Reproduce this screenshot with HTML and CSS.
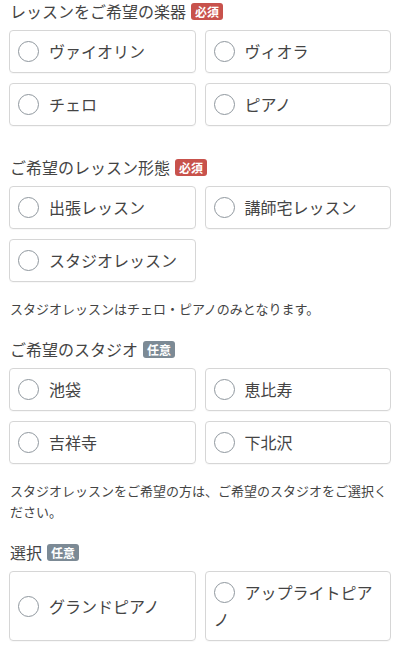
FILE: index.html
```html
<!DOCTYPE html>
<html lang="ja">
<head>
<meta charset="utf-8">
<link rel="stylesheet" href="styles.css">
</head>
<body>
<div class="form">
  <div class="field">
    <div class="label">レッスンをご希望の楽器<span class="badge badge-req">必須</span></div>
    <div class="choices">
      <label class="choice"><span class="text"><span class="radio"></span>ヴァイオリン</span></label>
      <label class="choice"><span class="text"><span class="radio"></span>ヴィオラ</span></label>
      <label class="choice"><span class="text"><span class="radio"></span>チェロ</span></label>
      <label class="choice"><span class="text"><span class="radio"></span>ピアノ</span></label>
    </div>
  </div>
  <div class="field">
    <div class="label">ご希望のレッスン形態<span class="badge badge-req">必須</span></div>
    <div class="choices">
      <label class="choice"><span class="text"><span class="radio"></span>出張レッスン</span></label>
      <label class="choice"><span class="text"><span class="radio"></span>講師宅レッスン</span></label>
      <label class="choice"><span class="text"><span class="radio"></span>スタジオレッスン</span></label>
    </div>
    <p class="note">スタジオレッスンはチェロ・ピアノのみとなります。</p>
  </div>
  <div class="field">
    <div class="label">ご希望のスタジオ<span class="badge badge-opt">任意</span></div>
    <div class="choices">
      <label class="choice"><span class="text"><span class="radio"></span>池袋</span></label>
      <label class="choice"><span class="text"><span class="radio"></span>恵比寿</span></label>
      <label class="choice"><span class="text"><span class="radio"></span>吉祥寺</span></label>
      <label class="choice"><span class="text"><span class="radio"></span>下北沢</span></label>
    </div>
    <p class="note">スタジオレッスンをご希望の方は、ご希望のスタジオをご選択ください。</p>
  </div>
  <div class="field">
    <div class="label">選択<span class="badge badge-opt">任意</span></div>
    <div class="choices">
      <label class="choice"><span class="text"><span class="radio"></span>グランドピアノ</span></label>
      <label class="choice"><span class="text"><span class="radio"></span>アップライトピアノ</span></label>
    </div>
  </div>
</div>
</body>
</html>
```
FILE: styles.css
```css
html, body {
  margin: 0;
  padding: 0;
  background: #ffffff;
}
body {
  font-family: "Noto Sans CJK JP", "Noto Sans", sans-serif;
  color: #333333;
}
.form {
  padding: 1px 9px 0;
}
.field {
  padding-bottom: 20px;
}
.label {
  font-size: 16px;
  line-height: 20px;
  color: #444444;
  margin-bottom: 9px;
  padding-left: 1px;
  display: flex;
  align-items: center;
}
.badge {
  display: inline-block;
  font-size: 12px;
  font-weight: bold;
  line-height: 17px;
  height: 17px;
  padding: 0 4px;
  border-radius: 3px;
  color: #ffffff;
  margin-left: 5px;
}
.badge-req {
  background: #c8524c;
}
.badge-opt {
  background: #7c8a95;
}
.choices {
  display: grid;
  grid-template-columns: 1fr 1fr;
  column-gap: 9px;
  row-gap: 10px;
  margin-bottom: 11px;
}
.choice {
  display: flex;
  align-items: center;
  border: 1px solid #d6d6d6;
  border-radius: 4px;
  padding: 7px 8px;
  font-size: 16px;
  line-height: 27px;
  color: #444444;
  box-shadow: 0 1px 1px rgba(0,0,0,0.03);
}
.radio {
  display: inline-block;
  box-sizing: border-box;
  width: 21px;
  height: 21px;
  border: 1.3px solid #8f979e;
  border-radius: 50%;
  vertical-align: -4px;
  margin-right: 10px;
  background: #fff;
}
.note {
  margin: 16px 0 0;
  font-size: 13px;
  line-height: 21px;
  color: #444444;
  padding-left: 1px;
}
```
